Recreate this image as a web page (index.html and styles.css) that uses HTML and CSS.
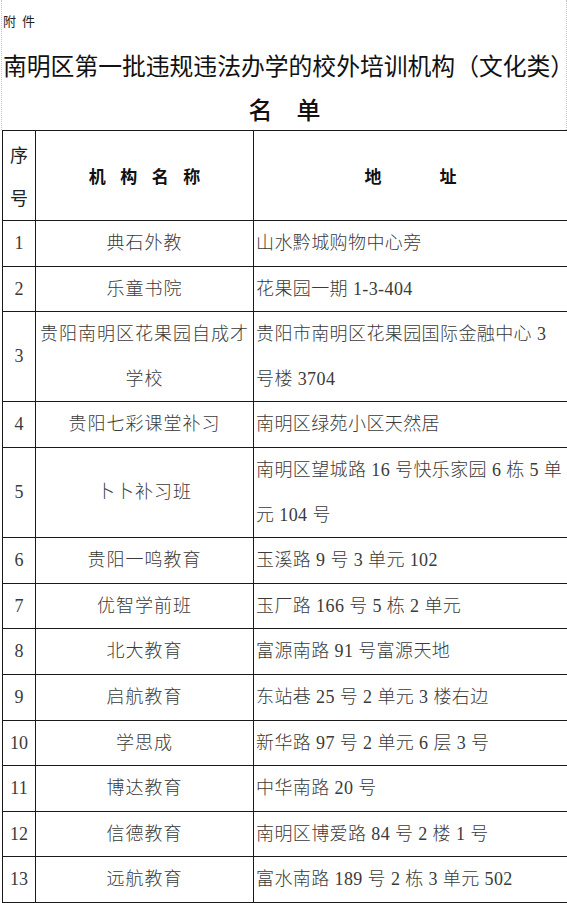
FILE: index.html
```html
<!DOCTYPE html>
<html lang="zh-CN">
<head>
<meta charset="utf-8">
<title>南明区第一批违规违法办学的校外培训机构（文化类）名单</title>
<link rel="stylesheet" href="styles.css">
</head>
<body>
<div class="sheet">
  <div class="head">
    <p class="attach">附件</p>
    <h1 class="title">南明区第一批违规违法办学的校外培训机构（文化类）</h1>
    <h2 class="subtitle"><span>名</span><span>单</span></h2>
  </div>
  <table class="list">
    <colgroup><col class="c-no"><col class="c-name"><col class="c-addr"></colgroup>
    <thead>
      <tr><th class="h-no">序<br>号</th><th class="h-name">机构名称</th><th class="h-addr">地址</th></tr>
    </thead>
    <tbody>
      <tr><td class="no">1</td><td class="name">典石外教</td><td class="addr">山水黔城购物中心旁</td></tr>
      <tr><td class="no">2</td><td class="name">乐童书院</td><td class="addr">花果园一期 1-3-404</td></tr>
      <tr><td class="no">3</td><td class="name">贵阳南明区花果园自成才<br>学校</td><td class="addr">贵阳市南明区花果园国际金融中心 3<br>号楼 3704</td></tr>
      <tr><td class="no">4</td><td class="name">贵阳七彩课堂补习</td><td class="addr">南明区绿苑小区天然居</td></tr>
      <tr><td class="no">5</td><td class="name">卜卜补习班</td><td class="addr">南明区望城路 16 号快乐家园 6 栋 5 单<br>元 104 号</td></tr>
      <tr><td class="no">6</td><td class="name">贵阳一鸣教育</td><td class="addr">玉溪路 9 号 3 单元 102</td></tr>
      <tr><td class="no">7</td><td class="name">优智学前班</td><td class="addr">玉厂路 166 号 5 栋 2 单元</td></tr>
      <tr><td class="no">8</td><td class="name">北大教育</td><td class="addr">富源南路 91 号富源天地</td></tr>
      <tr><td class="no">9</td><td class="name">启航教育</td><td class="addr">东站巷 25 号 2 单元 3 楼右边</td></tr>
      <tr><td class="no">10</td><td class="name">学思成</td><td class="addr">新华路 97 号 2 单元 6 层 3 号</td></tr>
      <tr><td class="no">11</td><td class="name">博达教育</td><td class="addr">中华南路 20 号</td></tr>
      <tr><td class="no">12</td><td class="name">信德教育</td><td class="addr">南明区博爱路 84 号 2 楼 1 号</td></tr>
      <tr><td class="no">13</td><td class="name">远航教育</td><td class="addr">富水南路 189 号 2 栋 3 单元 502</td></tr>
    </tbody>
  </table>
</div>
</body>
</html>
```
FILE: styles.css
```css
html, body {
  margin: 0;
  padding: 0;
  background: #ffffff;
  overflow: hidden;
}

.sheet {
  padding-left: 1px;
  width: 566px;
}

.head {
  padding: 14px 0 6px 1px;
  border-left: 1px dotted #c4c4c4;
  border-right: 1px dotted #c4c4c4;
  overflow: hidden;
  font-family: "Noto Sans CJK SC", sans-serif;
  color: #111111;
}

.attach {
  margin: 0;
  font-size: 13px;
  line-height: 14px;
  letter-spacing: 6px;
  color: #222222;
}

.title {
  margin: 22px 0 0;
  font-size: 23.8px;
  line-height: 30px;
  font-weight: 400;
  white-space: nowrap;
}

.subtitle {
  margin: 14px 0 0;
  display: flex;
  justify-content: center;
  gap: 24px;
  font-size: 24px;
  line-height: 30px;
  font-weight: 500;
}

.list {
  margin-left: 1px;
  width: 565px;
  border-collapse: collapse;
  table-layout: fixed;
  font-family: "Liberation Serif", "Noto Sans CJK SC", serif;
  font-size: 18px;
  color: #3a3a3a;
}

.c-no { width: 33px; }
.c-name { width: 218px; }
.c-addr { width: 314px; }

.list th,
.list td {
  border: 1px solid #1a1a1a;
  padding: 0;
}

.list th {
  height: 89px;
  color: #111111;
  font-family: "Noto Sans CJK SC", sans-serif;
}

.list th.h-no {
  font-weight: 400;
  font-size: 18px;
  line-height: 42.5px;
  color: #222222;
}

.list th.h-name {
  font-size: 17px;
  font-weight: 700;
  letter-spacing: 14.5px;
  padding-left: 14.5px;
}

.list th.h-addr {
  font-size: 17px;
  font-weight: 700;
  letter-spacing: 58px;
  padding-left: 58px;
}

.list td {
  line-height: 44.6px;
  font-weight: 300;
}

.no {
  text-align: center;
}

.name {
  text-align: center;
  letter-spacing: 1px;
}

.list td.name {
  padding: 0 2px;
}

.list td.addr {
  text-align: left;
  padding-left: 2px;
  letter-spacing: 0.4px;
  white-space: nowrap;
}
```
